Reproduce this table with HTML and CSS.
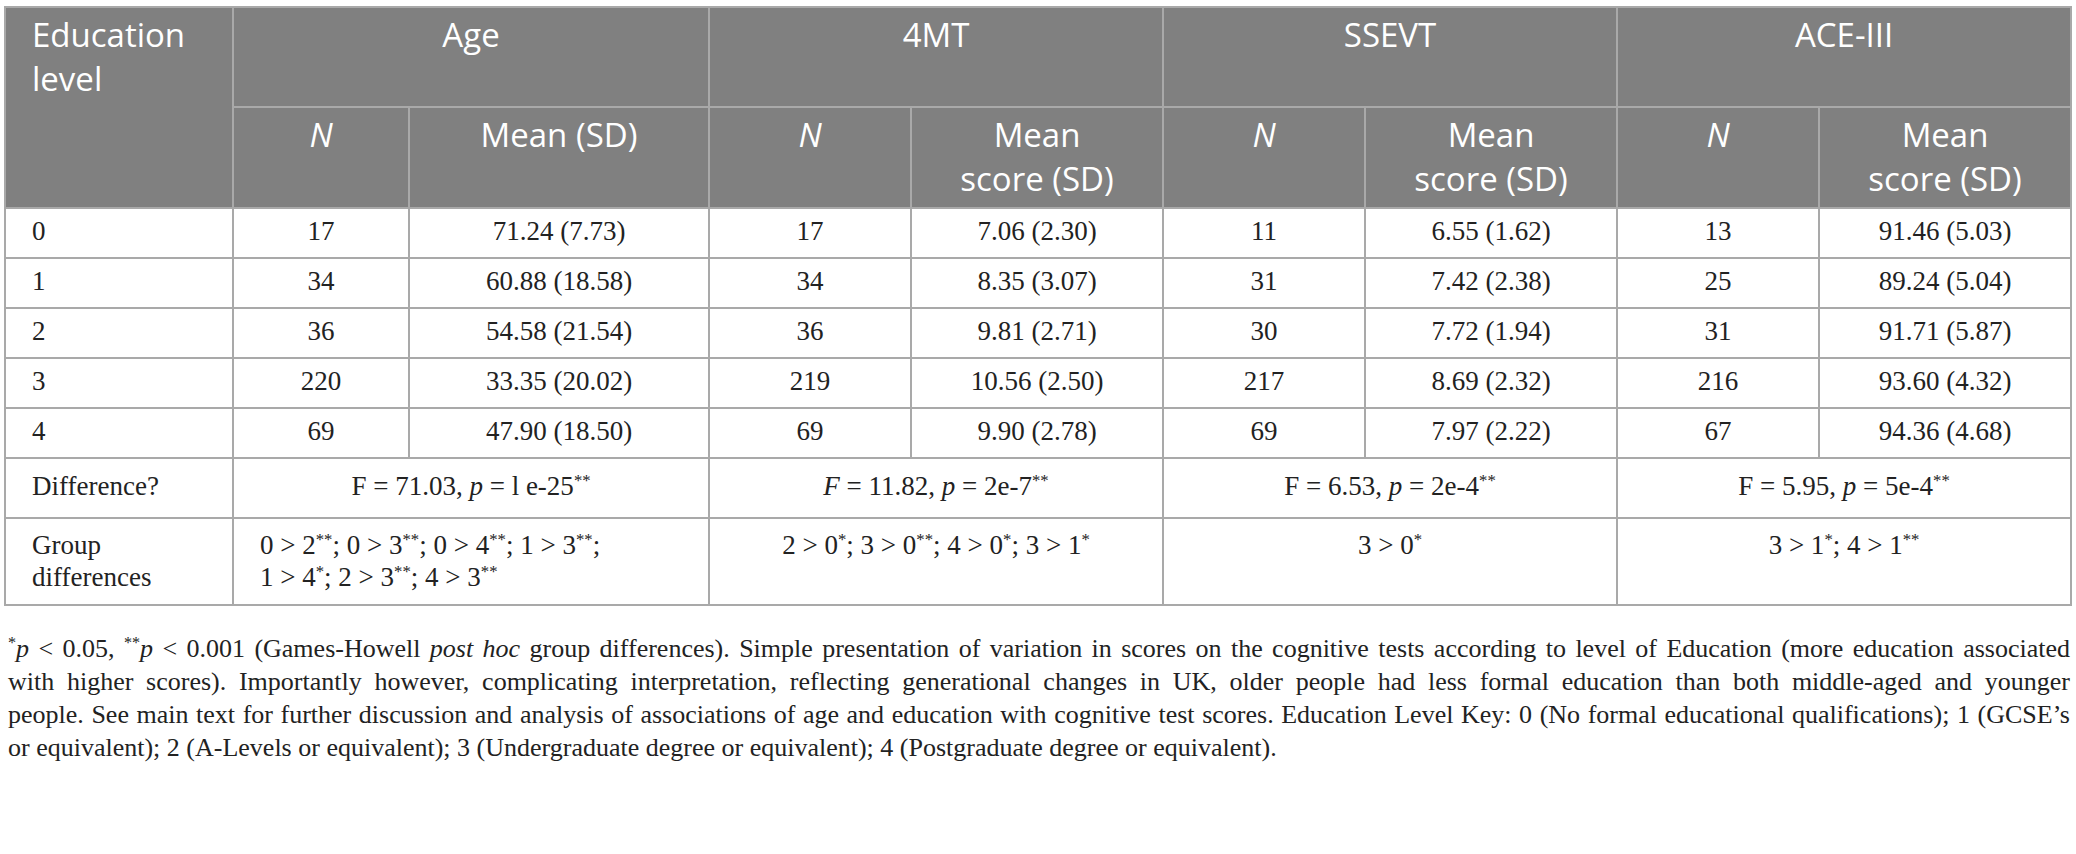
FILE: index.html
```html
<!DOCTYPE html>
<html lang="en">

<head>
    <meta charset="UTF-8">
    <meta name="viewport" content="width=device-width, initial-scale=1.0">
    <title>Cognitive test scores by level of education</title>
    <link rel="stylesheet" href="styles.css">
</head>

<body>
<div class="container">
    <table class="results">
        <colgroup>
            <col class="col-level">
            <col class="col-n-age">
            <col class="col-mean-age">
            <col class="col-n">
            <col class="col-mean">
            <col class="col-n">
            <col class="col-mean">
            <col class="col-n">
            <col class="col-mean">
        </colgroup>
        <thead>
            <tr class="head-top">
                <th rowspan="2" class="left">Education level</th>
                <th colspan="2">Age</th>
                <th colspan="2">4MT</th>
                <th colspan="2">SSEVT</th>
                <th colspan="2">ACE-III</th>
            </tr>
            <tr class="head-sub">
                <th><i>N</i></th>
                <th>Mean (SD)</th>
                <th><i>N</i></th>
                <th>Mean<br>score (SD)</th>
                <th><i>N</i></th>
                <th>Mean<br>score (SD)</th>
                <th><i>N</i></th>
                <th>Mean<br>score (SD)</th>
            </tr>
        </thead>
        <tbody>
            <tr>
                <td class="left">0</td>
                <td>17</td><td>71.24 (7.73)</td>
                <td>17</td><td>7.06 (2.30)</td>
                <td>11</td><td>6.55 (1.62)</td>
                <td>13</td><td>91.46 (5.03)</td>
            </tr>
            <tr>
                <td class="left">1</td>
                <td>34</td><td>60.88 (18.58)</td>
                <td>34</td><td>8.35 (3.07)</td>
                <td>31</td><td>7.42 (2.38)</td>
                <td>25</td><td>89.24 (5.04)</td>
            </tr>
            <tr>
                <td class="left">2</td>
                <td>36</td><td>54.58 (21.54)</td>
                <td>36</td><td>9.81 (2.71)</td>
                <td>30</td><td>7.72 (1.94)</td>
                <td>31</td><td>91.71 (5.87)</td>
            </tr>
            <tr>
                <td class="left">3</td>
                <td>220</td><td>33.35 (20.02)</td>
                <td>219</td><td>10.56 (2.50)</td>
                <td>217</td><td>8.69 (2.32)</td>
                <td>216</td><td>93.60 (4.32)</td>
            </tr>
            <tr>
                <td class="left">4</td>
                <td>69</td><td>47.90 (18.50)</td>
                <td>69</td><td>9.90 (2.78)</td>
                <td>69</td><td>7.97 (2.22)</td>
                <td>67</td><td>94.36 (4.68)</td>
            </tr>
            <tr class="stat-row">
                <td class="left">Difference?</td>
                <td colspan="2">F = 71.03, <i>p</i> = l e-25<sup>**</sup></td>
                <td colspan="2"><i>F</i> = 11.82, <i>p</i> = 2e-7<sup>**</sup></td>
                <td colspan="2">F = 6.53, <i>p</i> = 2e-4<sup>**</sup></td>
                <td colspan="2">F = 5.95, <i>p</i> = 5e-4<sup>**</sup></td>
            </tr>
            <tr class="group-row">
                <td class="left">Group differences</td>
                <td colspan="2" class="left">0 &gt; 2<sup>**</sup>; 0 &gt; 3<sup>**</sup>; 0 &gt; 4<sup>**</sup>; 1 &gt; 3<sup>**</sup>;<br>1 &gt; 4<sup>*</sup>; 2 &gt; 3<sup>**</sup>; 4 &gt; 3<sup>**</sup></td>
                <td colspan="2">2 &gt; 0<sup>*</sup>; 3 &gt; 0<sup>**</sup>; 4 &gt; 0<sup>*</sup>; 3 &gt; 1<sup>*</sup></td>
                <td colspan="2">3 &gt; 0<sup>*</sup></td>
                <td colspan="2">3 &gt; 1<sup>*</sup>; 4 &gt; 1<sup>**</sup></td>
            </tr>
        </tbody>
    </table>

    <!-- table footnote, one span per printed line -->
    <p class="footnote">
        <span class="line"><sup>*</sup><i>p</i> &lt; 0.05, <sup>**</sup><i>p</i> &lt; 0.001 (Games-Howell <i>post hoc</i> group differences). Simple presentation of variation in scores on the cognitive tests according to level of Education (more education associated</span>
        <span class="line">with higher scores). Importantly however, complicating interpretation, reflecting generational changes in UK, older people had less formal education than both middle-aged and younger</span>
        <span class="line">people. See main text for further discussion and analysis of associations of age and education with cognitive test scores. Education Level Key: 0 (No formal educational qualifications); 1 (GCSE’s</span>
        <span class="line last">or equivalent); 2 (A-Levels or equivalent); 3 (Undergraduate degree or equivalent); 4 (Postgraduate degree or equivalent).</span>
    </p>
</div>
</body>

</html>
```

FILE: styles.css
```css
* {
    box-sizing: border-box;
    margin: 0;
    padding: 0;
}

body {
    font-family: "Liberation Serif", "Times New Roman", serif;
    background-color: #fff;
    color: #222;
}

.container {
    padding: 6px 8px 0 4px;
}

table.results {
    width: 2064px;
    border-collapse: collapse;
    table-layout: fixed;
    border: 2px solid #a9a9a9;
}

.col-level { width: 228px; }
.col-n-age { width: 176px; }
.col-mean-age { width: 300px; }
.col-n { width: 202px; }
.col-mean { width: 252px; }

th, td {
    border: 2px solid #a9a9a9;
    text-align: center;
    vertical-align: top;
}

th {
    background-color: #808080;
    color: #fff;
    font-family: "Open Sans", "Noto Sans", sans-serif;
    font-weight: 400;
    font-size: 33px;
    line-height: 44px;
    padding: 5px 26px 6px;
}

.head-top th {
    height: 100px;
}

.head-sub th {
    height: 101px;
}

td {
    font-size: 27px;
    line-height: 32px;
    padding: 6px 26px 4px;
    height: 50px;
}

.left {
    text-align: left;
}

.stat-row td {
    height: 60px;
    padding-top: 11px;
}

.group-row td {
    height: 87px;
    padding-top: 10px;
}

sup {
    font-size: 0.62em;
    line-height: 0;
    vertical-align: 0.55em;
}

.footnote {
    font-size: 26px;
    line-height: 33px;
    padding: 26px 2px 0 4px;
    width: 2068px;
}

.footnote .line {
    display: block;
    text-align: justify;
    text-align-last: justify;
    white-space: nowrap;
}

.footnote .line.last {
    text-align-last: left;
}
```
